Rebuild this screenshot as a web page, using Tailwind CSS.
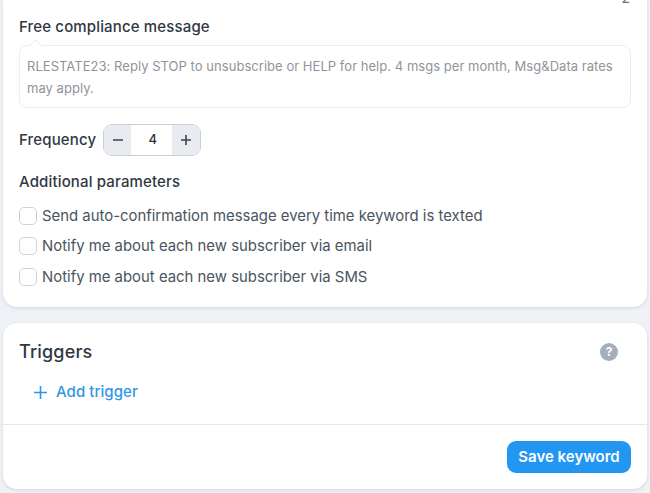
<!DOCTYPE html>
<html lang="en">
  <head>
    <meta charset="UTF-8" />
    <title>Keyword settings</title>
    <script src="https://cdn.jsdelivr.net/npm/@tailwindcss/browser@4"></script>
  </head>
  <body class="bg-[#eef1f5] h-[493px] w-[650px] overflow-hidden font-['Inter',sans-serif]">
    <div class="px-[3px] flex flex-col gap-[16px]">
      <!-- Compliance card -->
      <section class="bg-white rounded-b-[14px] shadow-[0_1px_3px_rgba(120,135,160,0.25)] px-4 pb-[18px] h-[307px]">
        <div class="h-[6px] overflow-hidden flex justify-end items-end pr-[1px]">
          <span class="text-[14px] leading-[16px] text-[#6b7785]">2</span>
        </div>
        <h2 class="mt-[12px] text-[15px] leading-[18px] font-[450] tracking-[0.01em] text-[#2f3843]">Free compliance message</h2>
        <!-- Message box with small pointer -->
        <div class="relative mt-[9px] border border-[#eceef2] rounded-[8px] h-[63px] px-[7px] pt-[9px] text-[13px] leading-[22px] tracking-[0.003em] text-[#8f949b]">
          <span class="absolute -top-[5px] left-[11px] w-[9px] h-[9px] rotate-45 bg-white border-l border-t border-[#eceef2]"></span>
          <p class="relative">RLESTATE23: Reply STOP to unsubscribe or HELP for help. 4 msgs per month, Msg&amp;Data rates may apply.</p>
        </div>
        <!-- Frequency stepper -->
        <div class="mt-[16px] flex items-center gap-[7px]">
          <span class="text-[15px] font-[450] tracking-[0.01em] text-[#2f3843]">Frequency</span>
          <div class="flex h-[32px] w-[98px] border border-[#c9ced6] rounded-[9px] overflow-hidden">
            <button class="w-[27px] bg-[#e8ebf0] flex items-center justify-center">
              <svg width="12" height="12" viewBox="0 0 12 12" fill="none" stroke="#3a4450" stroke-width="1.6"><path d="M1 6h10"></path></svg>
            </button>
            <span class="flex-1 flex items-center justify-center pl-[2px] text-[13px] font-medium text-[#2b3440]">4</span>
            <button class="w-[28px] bg-[#e8ebf0] flex items-center justify-center">
              <svg width="12" height="12" viewBox="0 0 12 12" fill="none" stroke="#3a4450" stroke-width="1.6"><path d="M1 6h10M6 1v10"></path></svg>
            </button>
          </div>
        </div>
        <h3 class="mt-[17px] text-[15px] leading-[18px] font-[450] tracking-[0.01em] text-[#2f3843]">Additional parameters</h3>
        <ul class="mt-[16px] flex flex-col gap-[12.25px] text-[14.9px] leading-[18px] text-[#4a5460]">
          <li class="flex items-center gap-[5px]">
            <span class="w-[18px] h-[18px] border border-[#ced3da] rounded-[5px]"></span>
            Send auto-confirmation message every time keyword is texted
          </li>
          <li class="flex items-center gap-[5px]">
            <span class="w-[18px] h-[18px] border border-[#ced3da] rounded-[5px]"></span>
            Notify me about each new subscriber via email
          </li>
          <li class="flex items-center gap-[5px]">
            <span class="w-[18px] h-[18px] border border-[#ced3da] rounded-[5px]"></span>
            Notify me about each new subscriber via SMS
          </li>
        </ul>
      </section>

      <!-- Triggers card -->
      <section class="bg-white rounded-[14px] shadow-[0_1px_3px_rgba(120,135,160,0.25)] h-[166px]">
        <div class="px-4 pt-[18px] flex items-center justify-between pr-[29px]">
          <h2 class="text-[18px] leading-[22px] font-medium tracking-[0.01em] text-[#2f3843]">Triggers</h2>
          <span class="w-[18px] h-[18px] rounded-full bg-[#a5adb9] flex items-center justify-center text-white text-[12px] font-bold">?</span>
        </div>
        <button class="mt-[19px] ml-[31px] flex items-center gap-[9px] text-[15px] leading-[20px] font-medium tracking-[0.004em] text-[#2f96e8]">
          <svg width="13" height="13" viewBox="0 0 13 13" fill="none" stroke="#2f96e8" stroke-width="1.6"><path d="M0 6.5h13M6.5 0v13"></path></svg>
          Add trigger
        </button>
        <div class="mt-[22px] border-t border-[#e3e6eb] pt-[16px] pr-[16px] flex justify-end">
          <button class="bg-[#2196f3] text-white font-semibold text-[15px] h-[32px] w-[124px] pt-[1px] rounded-[9px]">Save keyword</button>
        </div>
      </section>
    </div>
  </body>
</html>
